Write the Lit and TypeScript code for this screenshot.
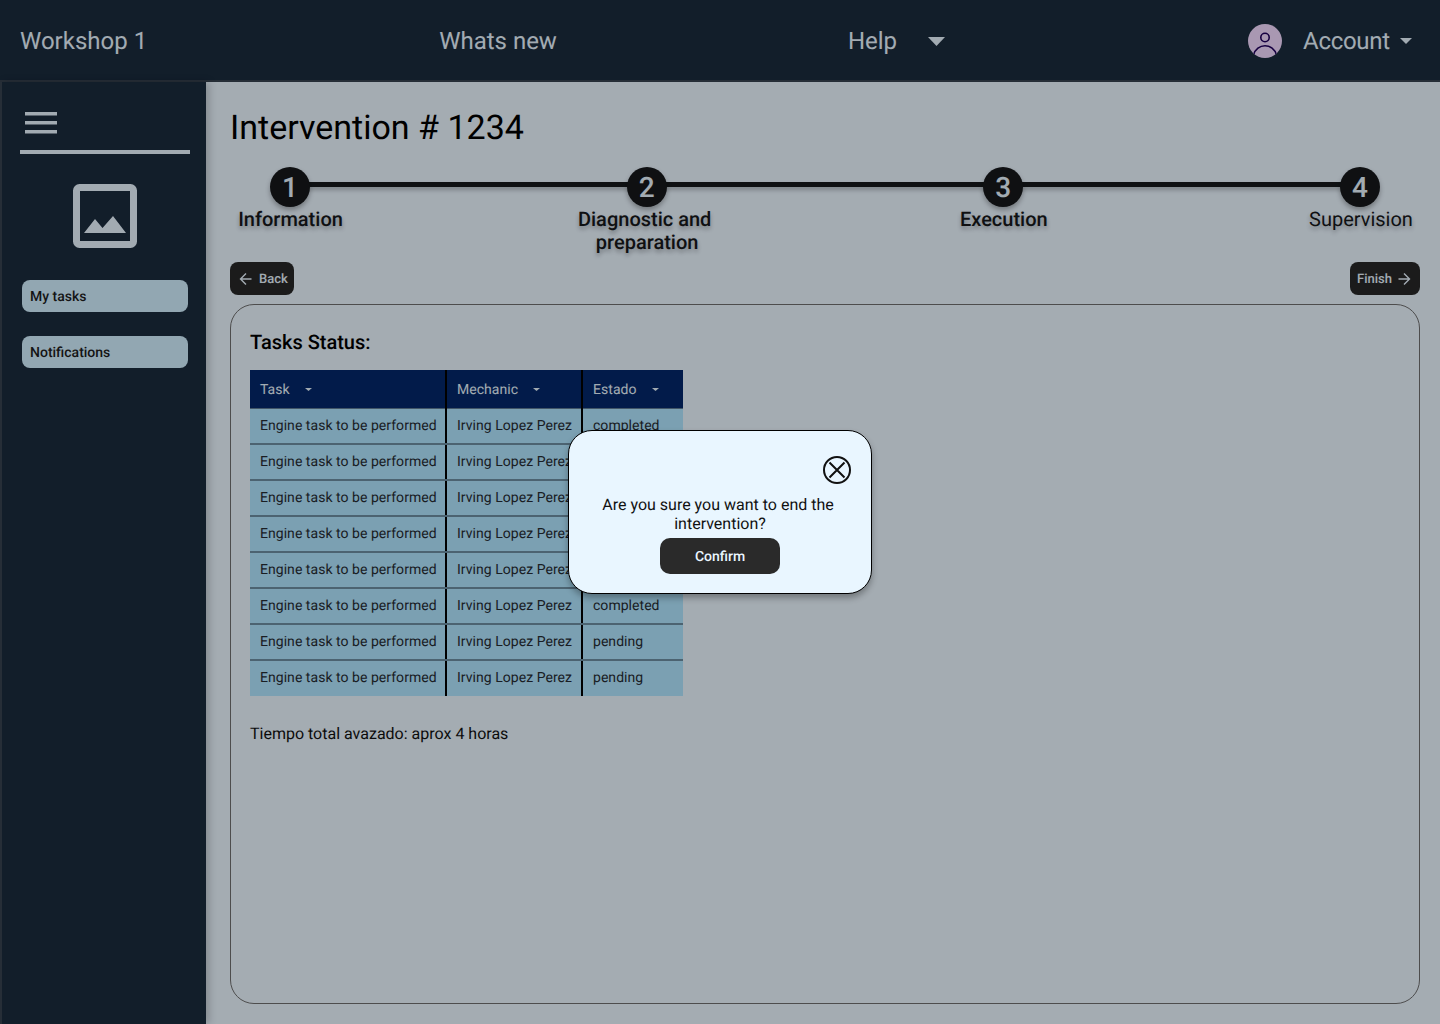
import { LitElement, html, css, svg } from "lit";
import { customElement } from "lit/decorators.js";

const caret = (w: number, h: number) => html`
  <svg width=${w} height=${h} viewBox="0 0 10 5" preserveAspectRatio="none">
    <path d="M0 0h10L5 5z" fill="currentColor"></path>
  </svg>
`;

const arrow = (flip: boolean) => html`
  <svg width="14" height="14" viewBox="0 0 14 14" fill="none" stroke="currentColor" stroke-width="1.4">
    ${flip
      ? svg`<path d="M12.5 7H1.5M7 1.5 1.5 7 7 12.5"></path>`
      : svg`<path d="M1.5 7h11M7 1.5 12.5 7 7 12.5"></path>`}
  </svg>
`;

const steps = [
  { n: 1, label: html`Information`, pending: false },
  { n: 2, label: html`Diagnostic and&nbsp;<br />preparation`, pending: false },
  { n: 3, label: html`Execution`, pending: false },
  { n: 4, label: html`Supervision`, pending: true },
];

const rows = [
  "completed",
  "completed",
  "completed",
  "completed",
  "completed",
  "completed",
  "pending",
  "pending",
];

@customElement("app-root")
export class AppRoot extends LitElement {
  static styles = css`
    :host {
      display: block;
      height: 1024px;
      overflow: hidden;
      position: relative;
      font-family: Roboto, "Liberation Sans", sans-serif;
      text-rendering: geometricPrecision;
      background: #ebf6ff;
      color: #000;
    }
    .topbar {
      height: 78px;
      padding-top: 2px;
      border-bottom: 2px solid #37424f;
      background: #1a2b3d;
      color: #e9f5ff;
      display: flex;
      align-items: center;
      padding-left: 20px;
      font-size: 24px;
    }
    .nav-what {
      margin-left: 292px;
    }
    .nav-help {
      margin-left: 291px;
      display: flex;
      align-items: center;
      gap: 31px;
    }
    .nav-account {
      margin-left: 303px;
      display: flex;
      align-items: center;
      letter-spacing: -0.3px;
    }
    .avatar {
      width: 34px;
      height: 34px;
      border-radius: 50%;
      background: #f2daff;
      margin-right: 21px;
      display: block;
    }
    .nav-account .down {
      margin-left: 10px;
      display: flex;
    }
    .body {
      display: flex;
      height: 942px;
    }
    .side {
      box-sizing: content-box;
      width: 170px;
      flex: none;
      border-left: 2px solid #37424f;
      background: #1a2b3d;
      box-shadow: 3px 0 8px rgba(0, 0, 0, 0.2);
      padding: 30px 16px 0 18px;
      position: relative;
    }
    .burger {
      display: block;
      margin-left: 5px;
    }
    .rule {
      height: 4px;
      background: #e9f5ff;
      margin: 16px 0 0;
    }
    .logo {
      display: block;
      margin: 30px 0 0 53px;
    }
    .side-btn {
      margin: 32px 2px 0 2px;
      height: 32px;
      border-radius: 8px;
      background: #d2f0ff;
      color: #1d1d1d;
      font-size: 14px;
      font-weight: 500;
      line-height: 34px;
      padding-left: 8px;
    }
    .side-btn + .side-btn {
      margin-top: 24px;
    }
    .main {
      flex: 1;
      padding: 25px 20px 20px 24px;
      display: flex;
      flex-direction: column;
      min-width: 0;
    }
    h1 {
      margin: 0;
      font-size: 34px;
      font-weight: 400;
      line-height: 42px;
      color: #000;
    }
    .stepper {
      position: relative;
      display: flex;
      justify-content: space-between;
      margin-top: 18px;
      height: 88px;
    }
    .line {
      position: absolute;
      left: 60px;
      right: 60px;
      top: 15px;
      height: 5px;
      background: #16181b;
      box-shadow: 0 3px 4px rgba(0, 0, 0, 0.25);
    }
    .step {
      position: relative;
      width: 120px;
      display: flex;
      flex-direction: column;
      align-items: center;
    }
    .num {
      width: 40px;
      height: 40px;
      border-radius: 50%;
      background: #16181b;
      color: #e9f5ff;
      font-size: 28px;
      font-weight: 500;
      line-height: 41px;
      text-align: center;
      box-shadow: 0 3px 5px rgba(0, 0, 0, 0.3);
    }
    .step-label {
      margin-top: 1px;
      padding-left: 1px;
      white-space: nowrap;
      text-align: center;
      font-size: 20px;
      font-weight: 500;
      line-height: 23px;
      color: #16181b;
      text-shadow: 0 3px 4px rgba(0, 0, 0, 0.3);
    }
    .step-label.pending {
      font-weight: 400;
      padding-left: 2px;
    }
    .actions {
      display: flex;
      justify-content: space-between;
      margin-top: 7px;
    }
    .act {
      height: 33px;
      border-radius: 8px;
      background: #282828;
      color: #e9f5ff;
      font-size: 13px;
      font-weight: 500;
      display: flex;
      align-items: center;
      box-sizing: border-box;
    }
    .act span {
      padding-top: 1px;
    }
    .act.back {
      width: 64px;
      padding-left: 9px;
      gap: 6px;
    }
    .act.finish {
      width: 70px;
      padding-left: 7px;
      gap: 5px;
    }
    .card {
      margin-top: 9px;
      flex: 1;
      border: 1px solid #6f6f6f;
      border-radius: 24px;
      padding: 25px 19px 0;
      min-height: 0;
    }
    h2 {
      margin: 0;
      font-size: 20px;
      font-weight: 500;
      line-height: 24px;
      color: #000;
    }
    table {
      border-collapse: collapse;
      table-layout: fixed;
      width: 433px;
      margin-top: 16px;
      font-size: 14px;
      letter-spacing: 0.04px;
      color: #262c33;
    }
    th,
    td {
      padding: 0 0 0 10px;
      text-align: left;
      font-weight: 400;
      white-space: nowrap;
      overflow: hidden;
      box-sizing: border-box;
    }
    th {
      height: 38px;
      padding-top: 2px;
      background: #03286a;
      color: #e9f5ff;
      border-bottom: 1px solid #5d7c95;
    }
    td {
      height: 36px;
      background: #b1e5ff;
      border-bottom: 2px solid #6d8ea3;
    }
    tr:last-child td {
      border-bottom: 0;
      padding-bottom: 2px;
    }
    th:nth-child(-n + 2),
    td:nth-child(-n + 2) {
      border-right: 2px solid #000;
    }
    .head {
      display: flex;
      align-items: center;
    }
    .head span {
      margin-left: 15px;
      display: flex;
    }
    .foot {
      margin: 28px 0 0;
      font-size: 16px;
      line-height: 19px;
      color: #111;
    }
    .scrim {
      position: absolute;
      inset: 0;
      background: rgba(0, 0, 0, 0.3);
    }
    .modal {
      position: absolute;
      left: 568px;
      top: 430px;
      width: 304px;
      height: 164px;
      box-sizing: border-box;
      border: 1px solid #000;
      border-radius: 24px;
      background: #e9f6ff;
      box-shadow: 0 4px 6px rgba(0, 0, 0, 0.3);
      display: flex;
      flex-direction: column;
      align-items: center;
    }
    .close {
      display: block;
      align-self: flex-end;
      margin: 24px 19px 0 0;
    }
    .modal p {
      margin: 10px 0 0;
      width: 260px;
      text-align: center;
      font-size: 16px;
      line-height: 19px;
      color: #111;
    }
    .confirm {
      margin-top: 5px;
      width: 120px;
      height: 36px;
      border-radius: 10px;
      background: #2a2a2a;
      color: #e9f6ff;
      font-size: 14px;
      font-weight: 500;
      line-height: 38px;
      text-align: center;
    }
  `;

  render() {
    return html`
      <header class="topbar">
        <span>Workshop 1</span>
        <span class="nav-what">Whats new</span>
        <span class="nav-help">Help ${caret(17, 9)}</span>
        <span class="nav-account">
          <svg class="avatar" viewBox="0 0 34 34" fill="none" stroke="#21005d" stroke-width="1.6">
            <circle cx="17" cy="13.500" r="4.200"></circle>
            <path d="M5.500 31c1.500-6 6.500-9.300 11.500-9.300s10 3.300 11.500 9.300"></path>
          </svg>
          Account
          <span class="down">${caret(12, 6)}</span>
        </span>
      </header>
      <div class="body">
        <aside class="side">
          <svg class="burger" width="32" height="22" viewBox="0 0 32 22" fill="#e9f5ff">
            <rect y="0" width="32" height="3.500"></rect>
            <rect y="9" width="32" height="3.500"></rect>
            <rect y="18" width="32" height="3.500"></rect>
          </svg>
          <div class="rule"></div>
          <svg class="logo" width="64" height="64" viewBox="0 0 64 64" fill="none">
            <rect x="3.500" y="3.500" width="57" height="57" rx="3" stroke="#e9f5ff" stroke-width="7"></rect>
            <path d="M11 49 22 35 29.500 44 40 32 53 49z" fill="#e9f5ff"></path>
          </svg>
          <div class="side-btn">My tasks</div>
          <div class="side-btn">Notifications</div>
        </aside>
        <main class="main">
          <h1>Intervention # 1234</h1>
          <div class="stepper">
            <div class="line"></div>
            ${steps.map(
              (s) => html`
                <div class="step">
                  <div class="num">${s.n}</div>
                  <div class="step-label ${s.pending ? "pending" : ""}">${s.label}</div>
                </div>
              `
            )}
          </div>
          <div class="actions">
            <div class="act back">${arrow(true)}<span>Back</span></div>
            <div class="act finish"><span>Finish</span>${arrow(false)}</div>
          </div>
          <section class="card">
            <h2>Tasks Status:</h2>
            <table>
              <colgroup>
                <col style="width:196px" />
                <col style="width:136px" />
                <col style="width:101px" />
              </colgroup>
              <thead>
                <tr>
                  <th><div class="head">Task<span>${caret(7, 3)}</span></div></th>
                  <th><div class="head">Mechanic<span>${caret(7, 3)}</span></div></th>
                  <th><div class="head">Estado<span>${caret(7, 3)}</span></div></th>
                </tr>
              </thead>
              <tbody>
                ${rows.map(
                  (status) => html`
                    <tr>
                      <td>Engine task to be performed</td>
                      <td>Irving Lopez Perez</td>
                      <td>${status}</td>
                    </tr>
                  `
                )}
              </tbody>
            </table>
            <p class="foot">Tiempo total avazado: aprox 4 horas</p>
          </section>
        </main>
      </div>
      <div class="scrim"></div>
      <div class="modal">
        <svg class="close" width="30" height="30" viewBox="0 0 30 30" fill="none" stroke="#111" stroke-width="2">
          <circle cx="15" cy="15" r="13"></circle>
          <path d="M7.500 7.500l15 15M22.500 7.500l-15 15"></path>
        </svg>
        <p>Are you sure you want to end the&nbsp; intervention?</p>
        <div class="confirm">Confirm</div>
      </div>
    `;
  }
}
